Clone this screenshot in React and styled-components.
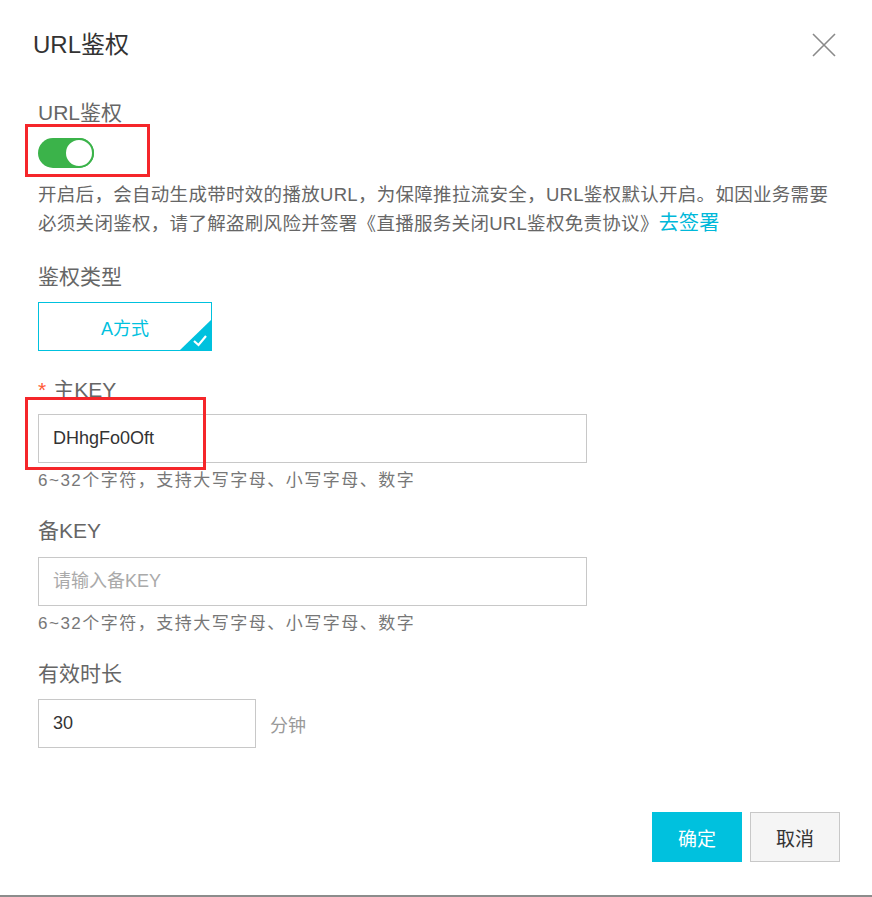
import React from "react";
import styled, { createGlobalStyle } from "styled-components";

const Global = createGlobalStyle`
  html, body { margin: 0; padding: 0; background: #fff; }
  body { font-family: "Liberation Sans", "Noto Sans CJK SC", sans-serif; }
  * { box-sizing: border-box; }
`;

const Dialog = styled.div`
  width: 872px;
  height: 897px;
  background: #fff;
  border-bottom: 2px solid #8c8c8c;
  display: flex;
  flex-direction: column;
`;

const Header = styled.div`
  height: 90px;
  display: flex;
  align-items: center;
  justify-content: space-between;
  padding: 0 36px 0 33px;
`;

const Title = styled.h1`
  margin: 0;
  font-size: 24px;
  font-weight: 400;
  color: #333;
  line-height: 30px;
`;

const Close = styled.button`
  width: 24px;
  height: 24px;
  padding: 0;
  border: none;
  background: none;
  display: flex;
  cursor: pointer;
`;

const Body = styled.div`
  padding: 0 38px;
  display: flex;
  flex-direction: column;
`;

const Label = styled.div`
  font-size: 21px;
  line-height: 24px;
  color: #666;
  margin-top: ${(p) => p.$top ?? 27}px;
  margin-bottom: ${(p) => p.$bottom ?? 13}px;
`;

const Star = styled.span`
  color: #ff5a36;
  margin-right: 7px;
`;

const Annotated = styled.div`
  position: relative;
  align-self: flex-start;
`;

const RedBox = styled.div`
  position: absolute;
  left: ${(p) => p.$l}px;
  top: ${(p) => p.$t}px;
  width: ${(p) => p.$w}px;
  height: ${(p) => p.$h}px;
  border: 3px solid #f5262a;
  pointer-events: none;
`;

const Track = styled.div`
  width: 56px;
  height: 30px;
  border-radius: 15px;
  background: #3bb34a;
  position: relative;
`;

const Knob = styled.div`
  position: absolute;
  right: 0;
  top: 0;
  width: 30px;
  height: 30px;
  border-radius: 50%;
  background: #fff;
  border: 2px solid #3bb34a;
`;

const Desc = styled.p`
  margin: 12px 0 0;
  font-size: 18.5px;
  letter-spacing: 0.3px;
  line-height: 29px;
  color: #666;
  white-space: nowrap;
`;

const Link = styled.a`
  color: #00b8d9;
  text-decoration: none;
  font-size: 20px;
  line-height: 29px;
`;

const TypeCard = styled.div`
  width: 174px;
  height: 49px;
  border: 1px solid #00c1de;
  color: #00c1de;
  font-size: 18px;
  display: flex;
  align-items: center;
  justify-content: center;
  position: relative;
  overflow: hidden;
`;

const Corner = styled.svg`
  position: absolute;
  right: 0;
  bottom: 0;
`;

const Input = styled.input`
  width: ${(p) => p.$w || 549}px;
  height: 49px;
  border: 1px solid #c8c8c8;
  padding: 0 14px;
  font-size: 18px;
  font-family: "Liberation Sans", "Noto Sans CJK SC", sans-serif;
  color: #333;
  outline: none;
  &::placeholder { color: #aaa; }
`;

const Hint = styled.div`
  margin-top: 8px;
  font-size: 17px;
  letter-spacing: 1.5px;
  line-height: 20px;
  color: #777;
`;

const Row = styled.div`
  display: flex;
  align-items: center;
  gap: 14px;
`;

const Unit = styled.span`
  font-size: 18px;
  color: #999;
`;

const Footer = styled.div`
  margin-top: 64px;
  display: flex;
  justify-content: flex-end;
  gap: 8px;
  padding-right: 32px;
`;

const Button = styled.button`
  width: 90px;
  height: 50px;
  font-size: 19px;
  font-family: "Liberation Sans", "Noto Sans CJK SC", sans-serif;
  border: 1px solid ${(p) => (p.$primary ? "#00c1de" : "#c8c8c8")};
  background: ${(p) => (p.$primary ? "#00c1de" : "#f5f5f5")};
  color: ${(p) => (p.$primary ? "#fff" : "#333")};
  cursor: pointer;
`;

export default function App() {
  return (
    <>
      <Global />
      <Dialog>
        <Header>
          <Title>URL鉴权</Title>
          <Close aria-label="close">
            <svg width="24" height="24" viewBox="0 0 24 24">
              <path d="M1 1 L23 23 M23 1 L1 23" stroke="#8a8a8a" strokeWidth="1.6" fill="none" />
            </svg>
          </Close>
        </Header>
        <Body>
          <Label $top={11}>URL鉴权</Label>
          <Annotated>
            <Track>
              <Knob />
            </Track>
            <RedBox $l={-13} $t={-14} $w={125} $h={53} />
          </Annotated>
          <Desc>
            开启后，会自动生成带时效的播放URL，为保障推拉流安全，URL鉴权默认开启。如因业务需要
            <br />
            必须关闭鉴权，请了解盗刷风险并签署《直播服务关闭URL鉴权免责协议》<Link href="#">去签署</Link>
          </Desc>
          <Label>鉴权类型</Label>
          <TypeCard>
            A方式
            <Corner width="31" height="30" viewBox="0 0 31 30">
              <polygon points="31,0 31,30 0,30" fill="#00c1de" />
              <path d="M14 21 L18.5 25 L26 16" stroke="#fff" strokeWidth="2.2" fill="none" />
            </Corner>
          </TypeCard>
          <Label $bottom={12}>
            <Star>*</Star>主KEY
          </Label>
          <Annotated>
            <Input defaultValue="DHhgFo0Oft" />
            <RedBox $l={-13} $t={-17} $w={181} $h={73} />
          </Annotated>
          <Hint>6~32个字符，支持大写字母、小写字母、数字</Hint>
          <Label $top={28} $bottom={14}>备KEY</Label>
          <Input placeholder="请输入备KEY" />
          <Hint>6~32个字符，支持大写字母、小写字母、数字</Hint>
          <Label $top={28}>有效时长</Label>
          <Row>
            <Input $w={218} defaultValue="30" />
            <Unit>分钟</Unit>
          </Row>
        </Body>
        <Footer>
          <Button $primary>确定</Button>
          <Button>取消</Button>
        </Footer>
      </Dialog>
    </>
  );
}
